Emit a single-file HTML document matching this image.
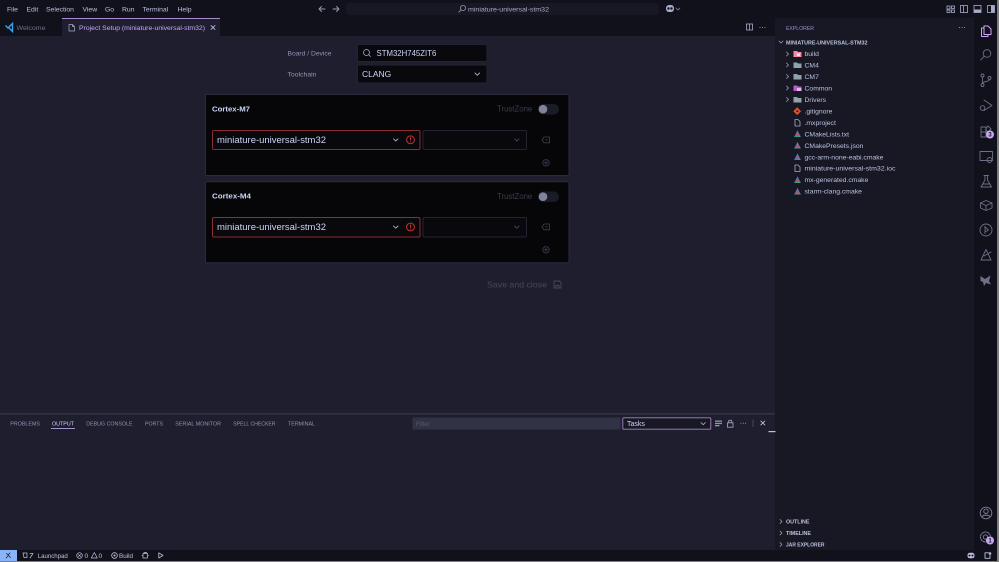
<!DOCTYPE html>
<html><head><meta charset="utf-8">
<style>
html,body{margin:0;padding:0;width:999px;height:562px;overflow:hidden;background:#11111b}
svg{display:block;filter:blur(.25px)}
text{font-family:"Liberation Sans","Noto Sans CJK JP",sans-serif;font-size:6.8px;fill:#cdd6f4;white-space:pre}
.m{fill:#bac2de}
.p{font-size:5.9px;fill:#8f95b2}
.h{font-size:5.9px;font-weight:bold;fill:#bac2de}
.l{stroke-linecap:round;stroke-linejoin:round;fill:none}
.a{fill:none;stroke:#6c7086;stroke-width:.9;stroke-linecap:round;stroke-linejoin:round}
</style></head><body>
<svg width="999" height="562" viewBox="0 0 999 562" xmlns="http://www.w3.org/2000/svg">
<defs>
<g id="cm"><path d="M0 -3.600L3.400 3H-3.400Z" fill="#3a78d8"/><path d="M0 -3.600L1.600 1.400H-1.200Z" fill="#e04848"/><path d="M-3.400 3L1.600 1.200L3.400 3Z" fill="#3fa05a"/></g>
</defs>
<rect width="999" height="562" fill="#11111b"/>
<!-- tab bar / editor -->
<rect x="0" y="36" width="775" height="514" fill="#1e1e2e"/>
<rect x="62" y="18" width="158" height="18" fill="#1e1e2e"/>
<rect x="62" y="18" width="158" height=".8" fill="#cba6f7"/>
<!-- sidebar -->
<rect x="775" y="18" width="199" height="532" fill="#181825"/>
<!-- right / bottom edge -->
<rect x="997" y="0" width="2" height="562" fill="#7d7d7d"/>
<rect x="0" y="561" width="999" height="1" fill="#7d7d7d"/>
<!-- menu -->
<text class="m" x="7" y="11.300">File</text>
<text class="m" x="26.500" y="11.300">Edit</text>
<text class="m" x="46" y="11.300">Selection</text>
<text class="m" x="82.500" y="11.300">View</text>
<text class="m" x="105" y="11.300">Go</text>
<text class="m" x="122" y="11.300">Run</text>
<text class="m" x="142.500" y="11.300">Terminal</text>
<text class="m" x="177.500" y="11.300">Help</text>
<!-- nav arrows -->
<path class="l" stroke="#9399b2" stroke-width=".9" d="M325 9H319M321.500 6.500L319 9L321.500 11.500M333 9H339M336.500 6.500L339 9L336.500 11.500"/>
<!-- command center -->
<rect x="346" y="3" width="313" height="12" rx="3" fill="#181825"/>
<circle cx="463" cy="8" r="2.600" fill="none" stroke="#9399b2" stroke-width=".8"/>
<path class="l" stroke="#9399b2" stroke-width=".8" d="M461 10L458.800 12.200"/>
<text x="468" y="11.300" textLength="81" lengthAdjust="spacingAndGlyphs" style="fill:#a6adc8;font-size:6.800px">miniature-universal-stm32</text>
<!-- copilot -->
<rect x="666" y="5" width="8" height="7" rx="3" fill="#a6adc8"/>
<circle cx="668.500" cy="8.500" r="1.200" fill="#11111b"/><circle cx="671.500" cy="8.500" r="1.200" fill="#11111b"/>
<path class="l" stroke="#9399b2" stroke-width=".7" d="M676 8L678 10L680 8"/>
<!-- layout icons -->
<g fill="none" stroke="#a6adc8" stroke-width=".8">
<rect x="947" y="6" width="3" height="3"/><rect x="947" y="10" width="3" height="2.500"/><rect x="951.500" y="6" width="3" height="2.500"/><rect x="951.500" y="10" width="3" height="2.500"/>
<rect x="960.500" y="5.500" width="7" height="7"/><path d="M963.500 5.500V12.500"/>
<rect x="974" y="5.500" width="7" height="7"/>
<rect x="987.500" y="5.500" width="7" height="7"/>
</g>
<rect x="974" y="9.500" width="7" height="3" fill="#a6adc8"/>
<rect x="991" y="5.500" width="3.500" height="7" fill="#a6adc8"/>
<!-- tabs -->
<path d="M5.500 25.500L8 28L12.500 23.500V31.500L8 27" fill="none" stroke="#3aa0e8" stroke-width="1.400"/>
<text x="16.500" y="30" textLength="29" lengthAdjust="spacingAndGlyphs" style="fill:#6c7086;font-size:6.800px">Welcome</text>
<path class="l" stroke="#a6adc8" stroke-width=".7" d="M69 24.500H72.500L74.500 26.500V31H69ZM72.500 24.500V26.500H74.500"/>
<text x="79" y="30" textLength="126" lengthAdjust="spacingAndGlyphs" style="fill:#cba6f7;font-size:6.800px">Project Setup (miniature-universal-stm32)</text>
<path class="l" stroke="#cdd6f4" stroke-width=".8" d="M211 25.500L215 29.500M215 25.500L211 29.500"/>
<!-- editor actions -->
<g fill="none" stroke="#a6adc8" stroke-width=".8"><rect x="746.500" y="24" width="6" height="6"/><path d="M749.500 24V30"/></g>
<g fill="#a6adc8"><circle cx="760" cy="27.500" r=".5"/><circle cx="762.500" cy="27.500" r=".5"/><circle cx="765" cy="27.500" r=".5"/></g>
<!-- top form -->
<text x="287.500" y="55.300" textLength="44" lengthAdjust="spacingAndGlyphs" style="fill:#8f95b2;font-size:6.500px">Board / Device</text>
<text x="287.500" y="76.500" textLength="29" lengthAdjust="spacingAndGlyphs" style="fill:#8f95b2;font-size:6.500px">Toolchain</text>
<rect x="357.500" y="44.500" width="129.500" height="17" rx="1.500" fill="#08080d" stroke="#232433"/>
<circle cx="366.500" cy="52.500" r="3" fill="none" stroke="#a6adc8" stroke-width=".8"/>
<path class="l" stroke="#a6adc8" stroke-width=".8" d="M369 55L370.500 56.500"/>
<text x="376.500" y="55.800" style="fill:#cdd6f4;font-size:7.800px">STM32H745ZIT6</text>
<rect x="357.500" y="65" width="129.500" height="18" rx="1.500" fill="#08080d" stroke="#232433"/>
<text x="362" y="77" style="fill:#cdd6f4;font-size:8.500px">CLANG</text>
<path class="l" stroke="#a6adc8" stroke-width=".9" d="M475 73L477.300 75.300L479.600 73"/>
<!-- card M7 -->
<rect x="205.500" y="94.500" width="363.500" height="81" rx="1" fill="#060609" stroke="#2a2b3d"/>
<text x="212" y="111.300" textLength="38" lengthAdjust="spacingAndGlyphs" style="fill:#cdd6f4;font-size:7.300px;font-weight:bold">Cortex-M7</text>
<text x="497" y="111.600" style="fill:#3b3d4e;font-size:7.800px">TrustZone</text>
<rect x="538" y="104" width="21" height="10.500" rx="5.250" fill="#1a1b26"/>
<circle cx="543" cy="109.200" r="4.300" fill="#7f849c"/>
<rect x="212.500" y="130.500" width="207.500" height="19" rx="1.500" fill="#08080d" stroke="#8b2f33"/>
<text x="217" y="142.800" textLength="109" lengthAdjust="spacingAndGlyphs" style="fill:#cdd6f4;font-size:9px">miniature-universal-stm32</text>
<path class="l" stroke="#a6adc8" stroke-width=".9" d="M393.500 138.800L395.800 141L398 138.800"/>
<circle cx="410.500" cy="139.800" r="3.900" fill="none" stroke="#c9352d" stroke-width="1"/>
<path class="l" stroke="#c9352d" stroke-width="1" d="M410.500 137.800V140M410.500 141.800V141.900"/>
<rect x="423" y="130.500" width="103.500" height="19" rx="1.500" fill="#08080d" stroke="#232433"/>
<path class="l" stroke="#45475a" stroke-width=".9" d="M514.500 138.800L516.800 141L519 138.800"/>
<g class="l" stroke="#3e4052" stroke-width=".8">
<path d="M544 137H549.500V142.800H544L542 139.900ZM545.500 139.900H547.500"/>
<circle cx="546" cy="162.800" r="3.200"/><path d="M546 161.200V164.400M544.400 162.800H547.600"/>
</g>
<!-- card M4 -->
<rect x="205.500" y="181.700" width="363.500" height="81" rx="1" fill="#060609" stroke="#2a2b3d"/>
<text x="212" y="198.500" textLength="39" lengthAdjust="spacingAndGlyphs" style="fill:#cdd6f4;font-size:7.300px;font-weight:bold">Cortex-M4</text>
<text x="497" y="198.800" style="fill:#3b3d4e;font-size:7.800px">TrustZone</text>
<rect x="538" y="191.500" width="21" height="10.500" rx="5.250" fill="#1a1b26"/>
<circle cx="543" cy="196.700" r="4.300" fill="#7f849c"/>
<rect x="212.500" y="217.500" width="207.500" height="19.500" rx="1.500" fill="#08080d" stroke="#8b2f33"/>
<text x="217" y="230" textLength="109" lengthAdjust="spacingAndGlyphs" style="fill:#cdd6f4;font-size:9px">miniature-universal-stm32</text>
<path class="l" stroke="#a6adc8" stroke-width=".9" d="M393.500 226L395.800 228.200L398 226"/>
<circle cx="410.500" cy="227" r="3.900" fill="none" stroke="#c9352d" stroke-width="1"/>
<path class="l" stroke="#c9352d" stroke-width="1" d="M410.500 225V227.200M410.500 229V229.100"/>
<rect x="423" y="217.500" width="103.500" height="19.500" rx="1.500" fill="#08080d" stroke="#232433"/>
<path class="l" stroke="#45475a" stroke-width=".9" d="M514.500 226L516.800 228.200L519 226"/>
<g class="l" stroke="#3e4052" stroke-width=".8">
<path d="M544 224H549.500V229.800H544L542 226.900ZM545.500 226.900H547.500"/>
<circle cx="546" cy="249.800" r="3.200"/><path d="M546 248.200V251.400M544.400 249.800H547.600"/>
</g>
<text x="487" y="287.300" textLength="60" lengthAdjust="spacingAndGlyphs" style="fill:#45475a;font-size:8.500px">Save and close</text>
<path class="l" stroke="#45475a" stroke-width=".9" d="M554 281H559.500L561 282.500V288H554ZM555.800 288V285.500H559V288"/>
<!-- panel -->
<rect x="0" y="413.500" width="775" height=".8" fill="#45475a"/>
<text class="p" x="10.300" y="425.300" textLength="29.700" lengthAdjust="spacingAndGlyphs">PROBLEMS</text>
<text class="p" x="52" y="425.300" textLength="22" lengthAdjust="spacingAndGlyphs" style="fill:#cdd6f4">OUTPUT</text>
<text class="p" x="86.300" y="425.300" textLength="46.200" lengthAdjust="spacingAndGlyphs">DEBUG CONSOLE</text>
<text class="p" x="145" y="425.300" textLength="18" lengthAdjust="spacingAndGlyphs">PORTS</text>
<text class="p" x="175.300" y="425.300" textLength="45.700" lengthAdjust="spacingAndGlyphs">SERIAL MONITOR</text>
<text class="p" x="233.300" y="425.300" textLength="42.200" lengthAdjust="spacingAndGlyphs">SPELL CHECKER</text>
<text class="p" x="288" y="425.300" textLength="27" lengthAdjust="spacingAndGlyphs">TERMINAL</text>
<rect x="51" y="428" width="24" height=".9" fill="#b4a0e0"/>
<rect x="412.500" y="417.500" width="208" height="12" fill="#313244"/>
<text x="416" y="425.800" style="fill:#585b70;font-size:6.200px">Filter</text>
<rect x="622.800" y="417.800" width="88" height="11.400" rx="1" fill="#181825" stroke="#9d86c6" stroke-width=".9"/>
<text x="627" y="425.800" style="fill:#cdd6f4;font-size:7px">Tasks</text>
<path class="l" stroke="#a6adc8" stroke-width=".8" d="M701 422.500L703.200 424.700L705.400 422.500"/>
<g fill="#8f95b2"><rect x="715" y="420.500" width="7" height="1.300"/><rect x="715" y="422.800" width="7" height="1.300"/><rect x="715" y="425" width="4.500" height="1.300"/></g>
<rect x="727.500" y="422.800" width="5.500" height="4.400" fill="none" stroke="#a6adc8" stroke-width=".8"/>
<path class="l" stroke="#a6adc8" stroke-width=".8" d="M728.700 422.800V421.300C728.700 419.700 731.800 419.700 731.800 421.300V422.800"/>
<g fill="#a6adc8"><circle cx="741" cy="423.300" r=".5"/><circle cx="743.300" cy="423.300" r=".5"/><circle cx="745.600" cy="423.300" r=".5"/></g>
<rect x="752.700" y="419.500" width=".7" height="7.500" fill="#585b70"/>
<path class="l" stroke="#cdd6f4" stroke-width=".8" d="M760.800 421L764.800 425M764.800 421L760.800 425"/>
<rect x="768.500" y="431" width="7" height="1.200" fill="#bac2de"/>
<!-- explorer -->
<text x="786" y="29.800" textLength="28" lengthAdjust="spacingAndGlyphs" style="fill:#a18fcc;font-size:5.900px">EXPLORER</text>
<g fill="#a6adc8"><circle cx="959.500" cy="27.500" r=".5"/><circle cx="962" cy="27.500" r=".5"/><circle cx="964.500" cy="27.500" r=".5"/></g>
<path class="l" stroke="#a6adc8" stroke-width=".7" d="M779 41L781 43L783 41"/>
<text class="h" x="786" y="44.500" textLength="81.500" lengthAdjust="spacingAndGlyphs">MINIATURE-UNIVERSAL-STM32</text>
<!-- folders -->
<g class="l" stroke="#a6adc8" stroke-width=".7">
<path d="M786.500 52L788.500 54L786.500 56"/><path d="M786.500 63L788.500 65L786.500 67"/><path d="M786.500 74.500L788.500 76.500L786.500 78.500"/><path d="M786.500 86L788.500 88L786.500 90"/><path d="M786.500 97.500L788.500 99.500L786.500 101.500"/>
</g>
<path d="M793.500 51H797L798 52H801.500V57H793.500Z" fill="#f38ba8"/><rect x="797" y="53.500" width="3" height="2.500" fill="#fde0e6"/>
<path d="M793.500 62.500H797L798 63.500H801.500V68H793.500Z" fill="#8fa3ad"/>
<path d="M793.500 74H797L798 75H801.500V79.500H793.500Z" fill="#8fa3ad"/>
<path d="M793.500 85.500H797L798 86.500H801.500V91H793.500Z" fill="#b75bc6"/><rect x="797" y="88" width="4.500" height="3" fill="#e3b4ee"/>
<path d="M793.500 97H797L798 98H801.500V102.500H793.500Z" fill="#8fa3ad"/>
<text x="804.500" y="56" class="m">build</text>
<text x="804.500" y="67.500" class="m">CM4</text>
<text x="804.500" y="79" class="m">CM7</text>
<text x="804.500" y="90.500" class="m">Common</text>
<text x="804.500" y="102" class="m">Drivers</text>
<text x="804.500" y="113.500" class="m">.gitignore</text>
<text x="804.500" y="125" class="m">.mxproject</text>
<text x="804.500" y="136.400" class="m">CMakeLists.txt</text>
<text x="804.500" y="147.800" class="m">CMakePresets.json</text>
<text x="804.500" y="159.300" class="m">gcc-arm-none-eabi.cmake</text>
<text x="804.500" y="170.700" class="m" textLength="91" lengthAdjust="spacingAndGlyphs">miniature-universal-stm32.ioc</text>
<text x="804.500" y="182.200" class="m">mx-generated.cmake</text>
<text x="804.500" y="193.600" class="m">starm-clang.cmake</text>
<path d="M797.200 107.300L801.100 111.200L797.200 115.100L793.300 111.200Z" fill="#e0512f"/><circle cx="797.400" cy="111.200" r="1" fill="#181825"/>
<path class="l" stroke="#a6adc8" stroke-width=".8" d="M795 119.500H798L800 121.500V126H795ZM795 165H798L800 167V171.500H795Z"/>
<use href="#cm" x="797.500" y="134"/>
<use href="#cm" x="797.500" y="145.500"/>
<use href="#cm" x="797.500" y="157"/>
<use href="#cm" x="797.500" y="180"/>
<use href="#cm" x="797.500" y="191.500"/>
<path class="l" stroke="#a6adc8" stroke-width=".7" d="M780 519.500L782 521.500L780 523.500M780 531L782 533L780 535M780 542.500L782 544.500L780 546.500"/>
<text class="h" x="786" y="523.500" textLength="23.500" lengthAdjust="spacingAndGlyphs">OUTLINE</text>
<text class="h" x="786" y="535" textLength="25" lengthAdjust="spacingAndGlyphs">TIMELINE</text>
<text class="h" x="786" y="546.500" textLength="38.500" lengthAdjust="spacingAndGlyphs">JAR EXPLORER</text>
<!-- activity bar -->
<path class="l" stroke="#cba6f7" stroke-width="1" d="M984 26H988L991 29V34.500H984ZM984 28H981.500V36.500H988V34.500"/>
<g class="a">
<circle cx="987" cy="53.500" r="3.800"/><path d="M984.200 56.300L980.700 60"/>
<circle cx="982.500" cy="75.500" r="1.500"/><circle cx="982.500" cy="85" r="1.500"/><circle cx="989.500" cy="78" r="1.500"/><path d="M982.500 77V83.500M989.500 79.500C989.500 82 982.500 81 982.500 83.500"/>
<path d="M984 100L992 105.500L984 110.500"/><circle cx="982.500" cy="108" r="2.300"/>
<path d="M981 127H986V132H981ZM981 132H986V137H981ZM986 132H990.500V137H986Z"/><path d="M988 126L991 129L988 132L985.500 129Z"/>
<rect x="980" y="151.500" width="12.500" height="9"/><circle cx="989.500" cy="160" r="2.500"/>
<path d="M984 175.500H988.500M985 175.500V180L981 187H991.500L987.500 180V175.500M983 184H989.500"/>
<path d="M986 200.500L992 203V208L986 210.500L980.500 208V203ZM980.500 203L986 205.500L992 203M986 205.500V210.500"/>
<circle cx="986" cy="230" r="6"/><path d="M985 226.500V233.500M985 227L988.500 230L985 232"/>
<path d="M986 249.500L981 260H991ZM984 256L991 252"/>
</g>
<path d="M980.500 276L985 279L990.500 275.500L989 281L991 284.500L986 283L984 286L983 282L980.500 281Z" fill="#6c7086"/>
<circle cx="990" cy="134.500" r="4" fill="#cba6f7"/>
<text x="988.400" y="136.700" style="fill:#11111b;font-size:6px;font-weight:bold">3</text>
<!-- accounts, settings -->
<g class="a" style="stroke:#7f849c">
<circle cx="986" cy="513" r="5.800"/><circle cx="986" cy="511.300" r="2.200"/><path d="M981.800 517C983 514.500 989 514.500 990.200 517"/>
<circle cx="985.500" cy="537" r="2.200"/><circle cx="985.500" cy="537" r="5" stroke-dasharray="1.800 1"/>
</g>
<circle cx="990" cy="540.500" r="4" fill="#cba6f7"/>
<text x="988.400" y="542.700" style="fill:#11111b;font-size:6px;font-weight:bold">1</text>
<!-- status bar -->
<rect x="0" y="550" width="997" height="11" fill="#11111b"/>
<rect x="0" y="550" width="17" height="11" fill="#89b4fa"/>
<path class="l" stroke="#1e1e2e" stroke-width=".8" d="M6 558L8 556M10 553L8 555M6.500 553.500L10.500 557.500"/>
<path class="l" stroke="#bac2de" stroke-width=".7" d="M23 553H27V557.500H24ZM30 558L33 553.500M30 553.500H33"/>
<text x="37.800" y="558" textLength="30" lengthAdjust="spacingAndGlyphs" style="fill:#bac2de;font-size:6.500px">Launchpad</text>
<circle cx="79.500" cy="555.500" r="2.800" fill="none" stroke="#bac2de" stroke-width=".7"/>
<path class="l" stroke="#bac2de" stroke-width=".6" d="M78.300 554.300L80.700 556.700M80.700 554.300L78.300 556.700"/>
<text x="84.500" y="558" style="fill:#bac2de;font-size:6.500px">0</text>
<path class="l" stroke="#bac2de" stroke-width=".7" d="M94.300 552.500L97.300 558H91.300Z"/>
<text x="98.500" y="558" style="fill:#bac2de;font-size:6.500px">0</text>
<circle cx="114.500" cy="555.500" r="2.800" fill="none" stroke="#bac2de" stroke-width=".8"/>
<circle cx="114.500" cy="555.500" r="1" fill="#bac2de"/>
<text x="119" y="558" textLength="14" lengthAdjust="spacingAndGlyphs" style="fill:#bac2de;font-size:6.500px">Build</text>
<path class="l" stroke="#bac2de" stroke-width=".7" d="M143 553.500H147.500V558H143ZM144 553V552.500H146.500V553M142 555.500H143M147.500 555.500H148.500"/>
<path class="l" stroke="#bac2de" stroke-width=".8" d="M158.800 552.800L163 555.500L158.800 558Z"/>
<rect x="967.500" y="552.800" width="7" height="5.500" rx="2.300" fill="#bac2de"/>
<circle cx="969.500" cy="555.500" r="1" fill="#11111b"/><circle cx="972.500" cy="555.500" r="1" fill="#11111b"/>
<path class="l" stroke="#bac2de" stroke-width=".9" d="M988.500 552.800H985V558.300H990V555.500"/>
<circle cx="990" cy="553.500" r="1.300" fill="#bac2de"/>
</svg>
</body></html>
